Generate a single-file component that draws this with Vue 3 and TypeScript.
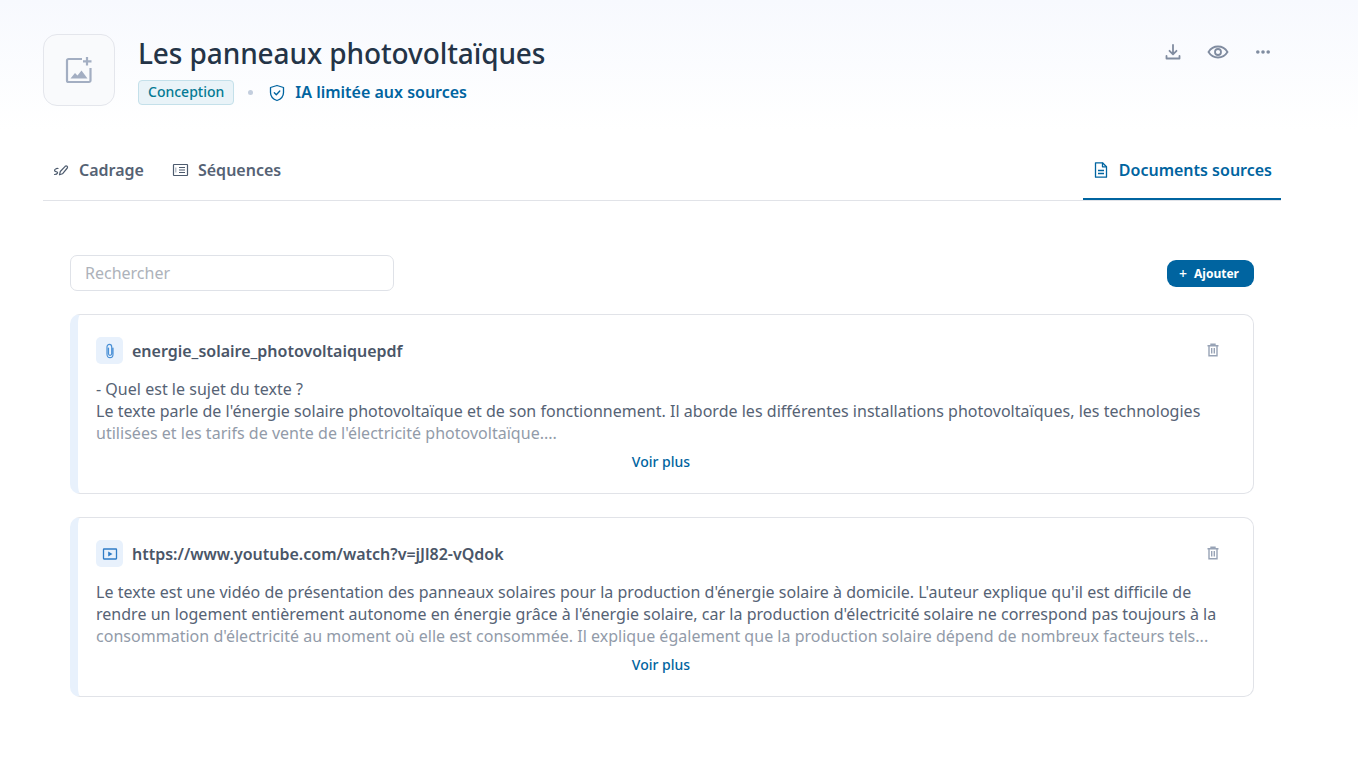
<script setup lang="ts">
interface Source {
  name: string
  kind: 'file' | 'video'
  lines: string[]
  faded: string
}

const sources: Source[] = [
  {
    name: 'energie_solaire_photovoltaiquepdf',
    kind: 'file',
    lines: [
      '- Quel est le sujet du texte ?',
      "Le texte parle de l'énergie solaire photovoltaïque et de son fonctionnement. Il aborde les différentes installations photovoltaïques, les technologies",
    ],
    faded: "utilisées et les tarifs de vente de l'électricité photovoltaïque....",
  },
  {
    name: 'https://www.youtube.com/watch?v=jJl82-vQdok',
    kind: 'video',
    lines: [
      "Le texte est une vidéo de présentation des panneaux solaires pour la production d'énergie solaire à domicile. L'auteur explique qu'il est difficile de",
      "rendre un logement entièrement autonome en énergie grâce à l'énergie solaire, car la production d'électricité solaire ne correspond pas toujours à la",
    ],
    faded: "consommation d'électricité au moment où elle est consommée. Il explique également que la production solaire dépend de nombreux facteurs tels...",
  },
]
</script>

<template>
  <div class="page">
    <header class="head">
      <div class="thumb">
        <svg width="30" height="30" viewBox="0 0 30 30" fill="none" stroke="#a3aec2" stroke-width="2.200">
          <path d="M18 4H4.500A1.500 1.500 0 0 0 3 5.500V25.500A1.500 1.500 0 0 0 4.500 27H25A1.500 1.500 0 0 0 26.500 25.500V13" />
          <path d="M23 2V10.500M19 6.300H27.500" />
          <path d="M6.500 23.500L11 18L13.500 20.500L17.500 15.500L23.500 23.500Z" fill="#a3aec2" stroke="none" />
        </svg>
      </div>
      <div class="head-text">
        <h1>Les panneaux photovoltaïques</h1>
        <div class="meta">
          <span class="badge">Conception</span>
          <span class="dot"></span>
          <svg width="18" height="18" viewBox="0 0 18 18" fill="none" stroke="#0064a0" stroke-width="1.300" stroke-linejoin="round" stroke-linecap="round">
            <path d="M9 1.500L15.500 3.500V8.500C15.500 12.500 12.500 15.300 9 16.500C5.500 15.300 2.500 12.500 2.500 8.500V3.500Z" />
            <path d="M6.300 8.800L8.300 10.800L11.800 7" />
          </svg>
          <span class="limit">IA limitée aux sources</span>
        </div>
      </div>
      <div class="actions">
        <svg width="18" height="18" viewBox="0 0 18 18" fill="none" stroke="#808ca0" stroke-width="1.800" stroke-linecap="round" stroke-linejoin="round">
          <path d="M9 2V11M5.500 7.800L9 11.300L12.500 7.800" />
          <path d="M2.500 13V15.500H15.500V13" />
        </svg>
        <svg width="22" height="18" viewBox="0 0 22 18" fill="none" stroke="#808ca0" stroke-width="1.800">
          <path d="M1.500 9C4 5 7 3.500 11 3.500S18 5 20.500 9C18 13 15 14.500 11 14.500S4 13 1.500 9Z" />
          <circle cx="11" cy="9" r="3" />
        </svg>
        <svg width="18" height="18" viewBox="0 0 18 18" fill="#808ca0">
          <circle cx="3.800" cy="9" r="1.800" />
          <circle cx="9" cy="9" r="1.800" />
          <circle cx="14.200" cy="9" r="1.800" />
        </svg>
      </div>
    </header>

    <nav class="tabs">
      <a class="tab">
        <svg width="18" height="18" viewBox="0 0 18 18" fill="none" stroke="#4d5b6e" stroke-width="1.200" stroke-linecap="round" stroke-linejoin="round">
          <path d="M7.500 13.800L8.300 10.500L13.200 5.300C14.400 4.200 16.300 5.700 15.300 7L10.500 12.800Z" />
          <path d="M6 7.500C4.500 7 1.800 8.800 2.800 10C3.800 11 6 10.500 5.500 12C5.200 13 3.500 13.500 2.500 13.500" />
        </svg>
        Cadrage
      </a>
      <a class="tab">
        <svg width="18" height="18" viewBox="0 0 18 18" fill="none" stroke="#4d5b6e" stroke-width="1.200">
          <rect x="2.500" y="3.500" width="14" height="11" rx="0.500" />
          <path d="M8 6.500H14M8 9H14M8 11.500H14" />
          <path d="M4.800 6.500V11.500" stroke="#a9b2bf" />
        </svg>
        Séquences
      </a>
      <a class="tab active">
        <svg width="18" height="18" viewBox="0 0 18 18" fill="none" stroke="#0064a0" stroke-width="1.300" stroke-linejoin="round">
          <path d="M3.500 1.800H10.500L14.500 5.800V16.200H3.500Z" />
          <path d="M10.500 1.800V5.800H14.500M6 9.500H12M6 12.500H12" />
        </svg>
        Documents sources
      </a>
    </nav>

    <main class="content">
      <div class="toolbar">
        <input class="search" placeholder="Rechercher" />
        <button class="add"><span class="plus">+</span>Ajouter</button>
      </div>

      <article v-for="s in sources" :key="s.name" class="card">
        <div class="card-head">
          <span class="kind">
            <svg v-if="s.kind === 'file'" width="16" height="16" viewBox="0 0 16 16" fill="none" stroke="#4a90d6" stroke-width="1.200" stroke-linecap="round">
              <path d="M11 5V11.200C11 13.300 9.700 14.700 8 14.700C6.300 14.700 5 13.300 5 11.200V4C5 2.500 6 1.400 7.400 1.400C8.800 1.400 9.700 2.500 9.700 4V10.800C9.700 11.800 9 12.300 8 12.300C7 12.300 6.500 11.600 6.500 10.800V5" />
            </svg>
            <svg v-else width="16" height="16" viewBox="0 0 16 16" fill="none" stroke="#2f7cc6" stroke-width="1.300">
              <rect x="1.500" y="3" width="13" height="10" rx="0.500" />
              <path d="M6.200 5.500L10.500 8L6.200 10.500Z" fill="#2f7cc6" stroke="none" />
            </svg>
          </span>
          <span class="name">{{ s.name }}</span>
          <svg class="trash" width="14" height="14" viewBox="0 0 14 14" fill="none" stroke="#98a3b6" stroke-width="1.400">
            <path d="M1.500 2.800H12.500M5 2.800V1.200H9V2.800" />
            <path d="M3 2.800V12.800H11V2.800M5.700 5V10.500M8.300 5V10.500" />
          </svg>
        </div>
        <div class="summary">
          <p v-for="l in s.lines" :key="l">{{ l }}</p>
          <p class="faded">{{ s.faded }}</p>
        </div>
        <a class="more">Voir plus</a>
      </article>
    </main>
  </div>
</template>

<style>
html,
body {
  margin: 0;
  background: #fff;
}
</style>

<style scoped>
.page {
  height: 767px;
  box-sizing: border-box;
  padding: 34px 77px 0 43px;
  font-family: 'Noto Sans', sans-serif;
  background: linear-gradient(180deg, #f7f9fe 0, #ffffff 130px);
  overflow: hidden;
}

.head {
  display: flex;
  height: 72px;
}

.thumb {
  width: 72px;
  height: 72px;
  box-sizing: border-box;
  display: flex;
  align-items: center;
  justify-content: center;
  background: #f9fafc;
  border: 1px solid #e4e6ec;
  border-radius: 14px;
}

.head-text {
  margin-left: 23px;
  flex: 1;
}

h1 {
  margin: 0;
  font-size: 28px;
  font-weight: 500;
  line-height: 38px;
  letter-spacing: -0.1px;
  color: #243447;
}

.meta {
  display: flex;
  align-items: center;
  margin-top: 8px;
  height: 25px;
}

.badge {
  box-sizing: border-box;
  height: 25px;
  line-height: 22px;
  padding: 0 9px;
  font-size: 14px;
  font-weight: 500;
  color: #047a94;
  background: #e9f3f8;
  border: 1px solid #c4e0ea;
  border-radius: 4px;
}

.dot {
  width: 5px;
  height: 5px;
  margin: 0 15px 0 14px;
  border-radius: 50%;
  background: #c3cede;
}

.limit {
  margin-left: 9px;
  font-size: 16px;
  font-weight: 600;
  line-height: 22px;
  margin-top: -1px;
  color: #0064a0;
}

.actions {
  display: flex;
  gap: 25px;
  padding: 9px 9px 0 0;
  height: 18px;
}

.tabs {
  display: flex;
  margin-top: 44px;
  height: 50px;
  border-bottom: 1px solid #e1e3e8;
}

.tab {
  display: flex;
  align-items: center;
  gap: 9px;
  height: 40px;
  padding: 0 9px;
  margin-right: 9px;
  font-size: 16px;
  font-weight: 600;
  color: #556274;
}

.tab.active {
  box-sizing: border-box;
  margin: 0 0 0 auto;
  height: 50px;
  padding: 0 9px 8px;
  color: #0064a0;
  border-bottom: 2px solid #0064a0;
}

.content {
  padding: 54px 27px 0;
}

.toolbar {
  display: flex;
  align-items: center;
  justify-content: space-between;
  margin-bottom: 23px;
}

.search {
  width: 324px;
  height: 36px;
  box-sizing: border-box;
  padding: 0 14px;
  font: 16px 'Noto Sans', sans-serif;
  border: 1px solid #dfe2e8;
  border-radius: 7px;
  outline: none;
  background: #fff;
}

.search::placeholder {
  color: #adb2ba;
  opacity: 1;
}

.add {
  display: flex;
  align-items: center;
  height: 27px;
  width: 87px;
  box-sizing: border-box;
  padding: 0 0 0 12px;
  border: 0;
  border-radius: 9px;
  font: 700 12px 'Noto Sans', sans-serif;
  color: #fff;
  background: #0064a0;
}

.plus {
  font-size: 14px;
  font-weight: 500;
  margin-right: 7px;
}

.card {
  box-sizing: border-box;
  height: 180px;
  margin-bottom: 23px;
  padding: 22px 33px 0 18px;
  background: #fff;
  border: 1px solid #e1e3e8;
  border-left: 8px solid #e8f1fc;
  border-radius: 10px;
}

.card-head {
  display: flex;
  align-items: center;
  height: 27px;
}

.kind {
  display: flex;
  align-items: center;
  justify-content: center;
  width: 27px;
  height: 27px;
  border-radius: 5px;
  background: #e8f1fc;
}

.name {
  margin-left: 9px;
  flex: 1;
  font-size: 16px;
  font-weight: 600;
  color: #4a5668;
}

.trash {
  margin-top: -1px;
}

.summary {
  margin-top: 14px;
  font-size: 16px;
  line-height: 22px;
  letter-spacing: 0.02px;
  color: #566375;
  white-space: nowrap;
}

.summary p {
  margin: 0;
}

.summary .faded {
  color: #929ba9;
}

.more {
  display: block;
  margin-top: 8px;
  padding-left: 6px;
  text-align: center;
  font-size: 14px;
  font-weight: 500;
  color: #0064a0;
}
</style>
